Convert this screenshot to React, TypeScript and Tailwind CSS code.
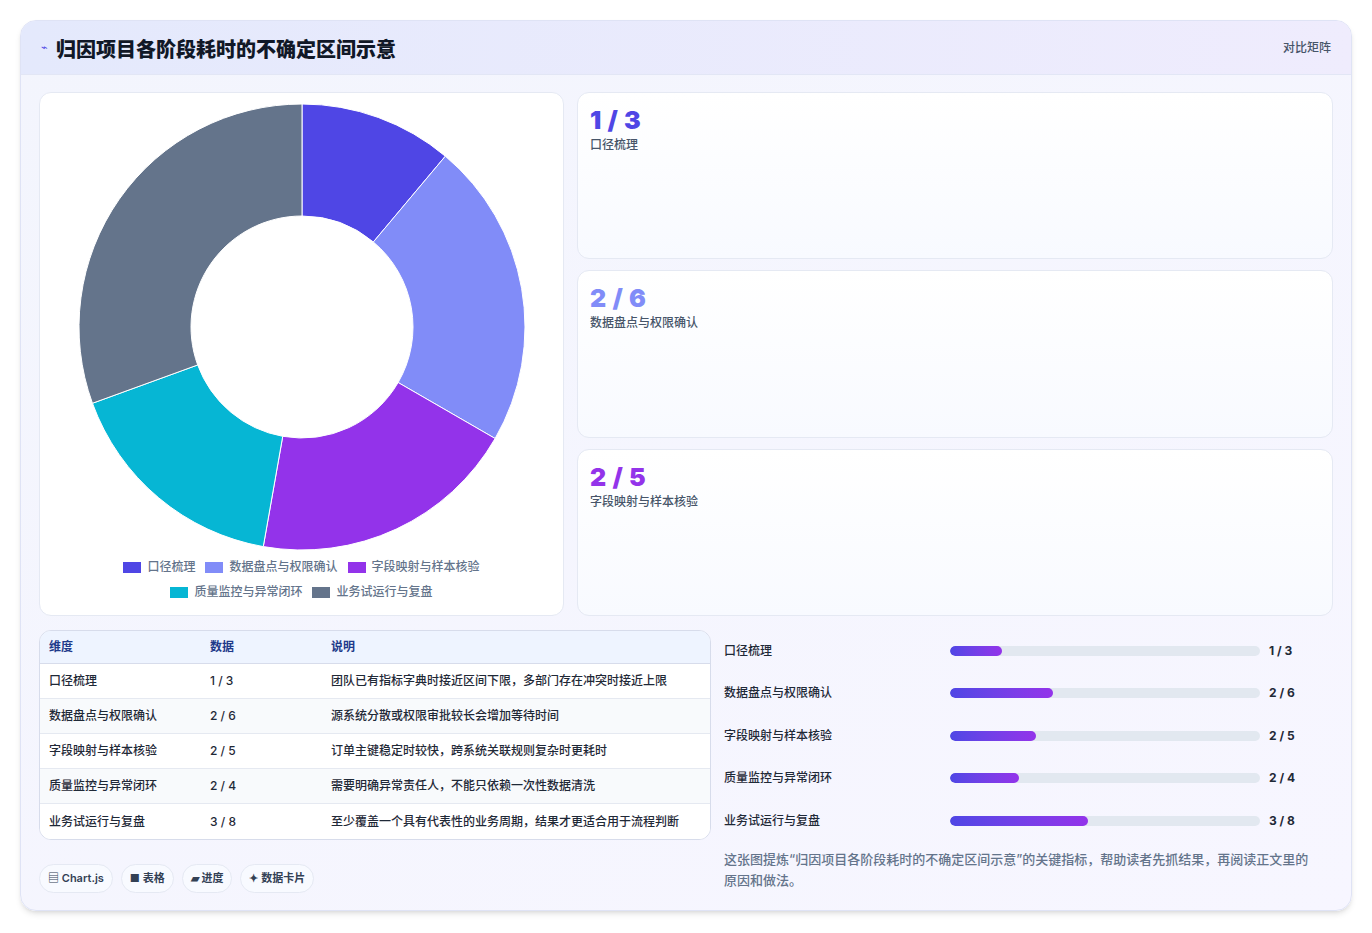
import React from 'react';

const rows = [
  { name: '口径梳理', lo: 1, hi: 3, note: '团队已有指标字典时接近区间下限，多部门存在冲突时接近上限', color: '#4f46e5' },
  { name: '数据盘点与权限确认', lo: 2, hi: 6, note: '源系统分散或权限审批较长会增加等待时间', color: '#818cf8' },
  { name: '字段映射与样本核验', lo: 2, hi: 5, note: '订单主键稳定时较快，跨系统关联规则复杂时更耗时', color: '#9333ea' },
  { name: '质量监控与异常闭环', lo: 2, hi: 4, note: '需要明确异常责任人，不能只依赖一次性数据清洗', color: '#06b6d4' },
  { name: '业务试运行与复盘', lo: 3, hi: 8, note: '至少覆盖一个具有代表性的业务周期，结果才更适合用于流程判断', color: '#64748b' },
];

const Donut = () => {
  const vals = rows.map(r => (r.lo + r.hi) / 2);
  const total = vals.reduce((a, b) => a + b, 0);
  const cx = 223, cy = 223, R = 223, r = 111;
  let a0 = 0;
  const pt = (rad: number, a: number) => [cx + rad * Math.sin(a), cy - rad * Math.cos(a)];
  return (
    <svg width="446" height="446" viewBox="0 0 446 446">
      {vals.map((v, i) => {
        const a1 = a0 + (v / total) * Math.PI * 2;
        const [x0, y0] = pt(R, a0), [x1, y1] = pt(R, a1), [x2, y2] = pt(r, a1), [x3, y3] = pt(r, a0);
        const large = a1 - a0 > Math.PI ? 1 : 0;
        const d = `M${x0} ${y0} A${R} ${R} 0 ${large} 1 ${x1} ${y1} L${x2} ${y2} A${r} ${r} 0 ${large} 0 ${x3} ${y3} Z`;
        a0 = a1;
        return <path key={i} d={d} fill={rows[i].color} stroke="#fff" strokeWidth="1" />;
      })}
    </svg>
  );
};

const Legend = ({ r }: { r: typeof rows[0] }) => (
  <span className="flex items-center gap-1.5">
    <span className="w-[18px] h-[11px] inline-block" style={{ background: r.color }} />
    {r.name}
  </span>
);

export default function App() {
  return (
    <div className="w-[1372px] h-[933px] bg-white pt-[20px] px-[20px]" style={{ fontFamily: 'Inter, "Noto Sans CJK SC", sans-serif' }}>
      <div className="h-[891px] rounded-2xl border border-[#dfe3f5] bg-gradient-to-br from-[#f3f5fd] to-[#f7f6ff] shadow-md overflow-hidden">
        <div className="h-[54px] flex items-center justify-between px-5 bg-gradient-to-r from-[#e4e9fc] to-[#efecfd] border-b border-[#e2e6f5]">
          <div className="flex items-center gap-2">
            <span className="text-[#4f46e5] text-[11px]">⌁</span>
            <h1 className="text-[20px] font-extrabold text-[#111827] mt-[4px]">归因项目各阶段耗时的不确定区间示意</h1>
          </div>
          <span className="text-[12px] font-medium text-[#475569]">对比矩阵</span>
        </div>
        <div className="px-[18px] pt-[17px]">
          <div className="flex gap-[13px] h-[524px]">
            <div className="w-[525px] bg-white rounded-xl border border-[#e5e9f3] flex flex-col items-center pt-[11px]">
              <Donut />
              <div className="mt-[8px] flex flex-col items-center gap-[7px] text-[12px] font-medium text-[#64748b]">
                <div className="flex gap-[10px]"><Legend r={rows[0]} /><Legend r={rows[1]} /><Legend r={rows[2]} /></div>
                <div className="flex gap-[10px]"><Legend r={rows[3]} /><Legend r={rows[4]} /></div>
              </div>
            </div>
            <div className="flex-1 flex flex-col gap-[11px]">
              {rows.slice(0, 3).map(r => (
                <div key={r.name} className="flex-1 bg-gradient-to-b from-white to-[#f8faff] rounded-xl border border-[#e5e9f3] px-3 pt-[11px]">
                  <div className="text-[25px] font-black leading-[32px] tracking-wide" style={{ color: r.color }}>{r.lo} / {r.hi}</div>
                  <div className="text-[12px] font-medium text-[#475569]">{r.name}</div>
                </div>
              ))}
            </div>
          </div>
          <div className="flex gap-[13px] mt-[14px]">
            <div className="w-[672px]">
              <div className="rounded-xl border border-[#d7dceb] overflow-hidden bg-white text-[12px] font-medium text-[#1f2937]">
                <div className="flex h-[33px] items-center bg-[#eef4ff] border-b border-[#d7dceb] font-semibold text-[#1e3a8a]">
                  <div className="w-[170px] pl-[9px]">维度</div><div className="w-[121px]">数据</div><div>说明</div>
                </div>
                {rows.map((r, i) => (
                  <div key={r.name} className={`flex h-[35px] items-center ${i % 2 ? 'bg-[#f8fafc]' : 'bg-white'} ${i < 4 ? 'border-b border-[#e5e9f1]' : ''}`}>
                    <div className="w-[170px] pl-[9px]">{r.name}</div><div className="w-[121px]">{r.lo} / {r.hi}</div><div>{r.note}</div>
                  </div>
                ))}
              </div>
              <div className="flex gap-[8px] mt-[24px] text-[11px] text-[#334155]">
                {['▤ Chart.js', '■ 表格', '▰ 进度', '✦ 数据卡片'].map(c => (
                  <span key={c} className="h-[29px] px-[8px] flex items-center rounded-full border border-[#e5e9f3] bg-[#f8faff] font-semibold">{c}</span>
                ))}
              </div>
            </div>
            <div className="flex-1 pr-[20px]">
              {rows.map(r => (
                <div key={r.name} className="flex items-center h-[43.5px] -mt-[1px] text-[12px] font-medium text-[#1f2937]">
                  <div className="w-[226px]">{r.name}</div>
                  <div className="w-[310px] h-[10px] rounded-full bg-[#e2e8f0] overflow-hidden">
                    <div className="h-full rounded-full bg-gradient-to-r from-[#4f46e5] to-[#9333ea]" style={{ width: `${(r.hi / 18) * 100}%` }} />
                  </div>
                  <div className="ml-[9px] font-bold">{r.lo} / {r.hi}</div>
                </div>
              ))}
              <p className="mt-[6px] text-[13px] font-medium leading-[21px] text-[#64748b]">这张图提炼“归因项目各阶段耗时的不确定区间示意”的关键指标，帮助读者先抓结果，再阅读正文里的原因和做法。</p>
            </div>
          </div>
        </div>
      </div>
    </div>
  );
}
